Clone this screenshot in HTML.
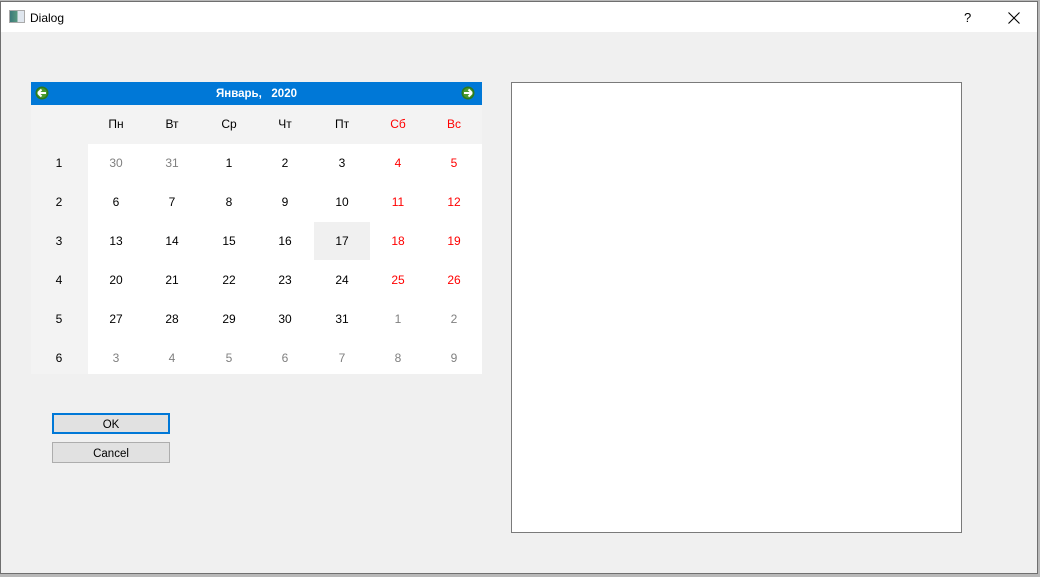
<!DOCTYPE html>
<html><head><meta charset="utf-8"><style>
*{margin:0;padding:0;box-sizing:border-box}
body{width:1040px;height:577px;background:#b8b8b8;position:relative;overflow:hidden;font-family:"Liberation Sans",sans-serif;font-size:12px;color:#000}
.win{position:absolute;left:0;top:1px;width:1038px;height:573px;border:1px solid #6f6f6f;background:#f0f0f0}
.title{position:absolute;left:0;top:0;width:1036px;height:30px;background:#fff}
.abs{position:absolute}
.cal{position:absolute;width:451px;height:292px;background:#fff}
.hdr{position:absolute;left:0;top:0;width:451px;height:23px;background:#0078d7;color:#fff;font-weight:bold;font-size:11.5px;text-align:center;line-height:25px}
.wk{position:absolute;left:0;top:23px;width:57px;height:269px;background:#f3f3f3}
.dh{position:absolute;left:57px;top:23px;width:394px;height:39px;background:#f3f3f3}
.c{position:absolute;width:56px;height:39px;line-height:39px;text-align:center}
.g{color:#808080}.r{color:#ff0000}
.btn{position:absolute;left:51px;width:118px;height:21px;background:#e1e1e1;border:1px solid #adadad;text-align:center;line-height:22px;font-size:11.5px}
</style></head><body>
<div class="win">
 <div class="title">
  <div class="abs" style="left:8px;top:8px;width:16px;height:13px;border:1px solid #aaa;background:linear-gradient(90deg,#3a7a7a 0,#5a9a80 55%,#dfe6ee 55%)"></div>
  <div class="abs" style="left:29px;top:9px;font-size:12px">Dialog</div>
  <div class="abs" style="left:963px;top:8px;font-size:13px">?</div>
  <svg class="abs" style="left:1007px;top:10px" width="12" height="12"><path d="M0.5 0.5L11.5 11.5M11.5 0.5L0.5 11.5" stroke="#000" stroke-width="1.1"/></svg>
 </div>
 <div class="cal" style="left:30px;top:80px">
  <div class="hdr">Январь,&nbsp;&nbsp;&nbsp;2020</div>
  <svg class="abs" style="left:4px;top:4px" width="14" height="14"><circle cx="7" cy="7" r="6.5" fill="#2d7a1e"/><circle cx="7" cy="7" r="5" fill="#4a9a2e"/><path d="M3 7h8M3 7l3.5-3.5M3 7l3.5 3.5" stroke="#fff" stroke-width="2" fill="none"/></svg>
  <svg class="abs" style="left:430px;top:4px" width="14" height="14"><circle cx="7" cy="7" r="6.5" fill="#2d7a1e"/><circle cx="7" cy="7" r="5" fill="#4a9a2e"/><path d="M3 7h8M11 7l-3.5-3.5M11 7l-3.5 3.5" stroke="#fff" stroke-width="2" fill="none"/></svg>
  <div class="wk"></div><div class="dh"></div>
  <div class="abs" style="left:283px;top:140px;width:56px;height:38px;background:#f0f0f0"></div>
  <div id="g"></div>
 </div>
 <div class="abs" style="left:510px;top:80px;width:451px;height:451px;background:#fff;border:1px solid #7a7a7a"></div>
 <div class="btn" style="top:411px;border:2px solid #0078d7;line-height:20px">OK</div>
 <div class="btn" style="top:440px">Cancel</div>
</div>
<script>
var cal=document.querySelector('.cal'),h='';
var xs=[57,113,170,226,283,339,395],names=['Пн','Вт','Ср','Чт','Пт','Сб','Вс'];
for(var i=0;i<7;i++)h+='<div class="c'+(i>4?' r':'')+'" style="left:'+xs[i]+'px;top:23px">'+names[i]+'</div>';
for(var w=0;w<6;w++){
 var t=62+w*39;
 h+='<div class="c" style="left:0px;top:'+t+'px">'+(w+1)+'</div>';
 for(var i=0;i<7;i++){
  var n,other;
  var idx=w*7+i-2;
  if(idx<0){n=30+w*7+i;other=true}
  else if(idx<31){n=idx+1;other=false}
  else{n=idx-30;other=true}
  var cls=other?' g':(i>4?' r':'');
  h+='<div class="c'+cls+'" style="left:'+xs[i]+'px;top:'+t+'px">'+n+'</div>';
 }
}
document.getElementById('g').outerHTML=h;
</script>
</body></html>
